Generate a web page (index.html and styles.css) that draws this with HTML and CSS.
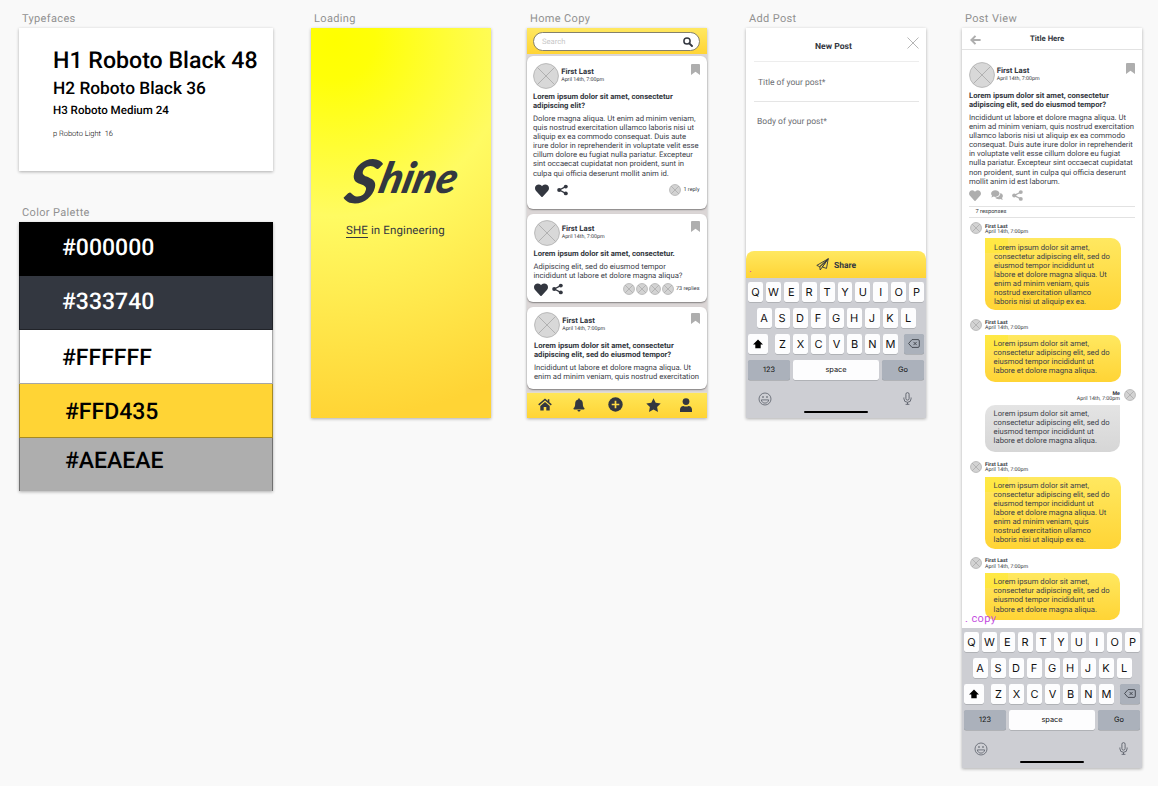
FILE: index.html
```html
<!DOCTYPE html>
<html lang="en">
<head>
<meta charset="utf-8">
<title>Shine artboards</title>
<link rel="stylesheet" href="styles.css">
</head>
<body>
<svg class="defs" width="0" height="0" aria-hidden="true">
  <symbol id="photo" viewBox="0 0 26 26"><circle cx="13" cy="13" r="12.4" fill="#d8d8d8" stroke="#b9b9b9" stroke-width="1"/><path d="M4.3 4.3 21.7 21.7M21.7 4.3 4.3 21.7" stroke="#adadad" stroke-width=".9"/></symbol>
  <symbol id="photo-s" viewBox="0 0 13 13"><circle cx="6.5" cy="6.5" r="5.9" fill="#d3d3d3" stroke="#b3b3b3" stroke-width=".9"/><path d="M2.3 2.3 10.7 10.7M10.7 2.3 2.3 10.7" stroke="#a8a8a8" stroke-width=".8"/></symbol>
  <symbol id="bookmark" viewBox="0 0 9 11"><path d="M1 0h7a1 1 0 0 1 1 1v10L4.500 7.800 0 11V1a1 1 0 0 1 1-1z" fill="#aeaeae"/></symbol>
  <symbol id="heart" viewBox="0 0 512 470"><path fill="currentColor" d="M462 42C408-4 326 4 276 56l-20 21-20-21C186 4 104-4 50 42-13 96-16 191 40 249l193 210c13 14 33 14 46 0l193-210c56-58 53-153-10-207z"/></symbol>
  <symbol id="share" viewBox="0 0 12 12"><path d="M9.500 2.300 2.600 6l6.900 3.700" fill="none" stroke="currentColor" stroke-width="1.400"/><g fill="currentColor"><circle cx="9.600" cy="2.300" r="2.150"/><circle cx="2.400" cy="6" r="2.200"/><circle cx="9.600" cy="9.700" r="2.150"/></g></symbol>
  <symbol id="comments" viewBox="0 0 12 10"><path fill="currentColor" d="M4.300.3C6.700.3 8.500 1.700 8.500 3.600S6.700 6.900 4.300 6.900c-.6 0-1.100-.1-1.600-.3C2 7.100 1.200 7.400.2 7.400c.5-.6.8-1.100.9-1.700C.5 5.100.1 4.400.1 3.600.1 1.700 1.900.3 4.300.3zM9.300 3.100c1.500.4 2.600 1.500 2.600 2.900 0 .8-.4 1.500-.9 2 .1.600.4 1.100.9 1.700-1 0-1.800-.3-2.500-.8-.5.2-1 .3-1.600.3-1.600 0-3-.7-3.700-1.700 2.900.2 5.400-1.500 5.200-4.400z"/></symbol>
  <symbol id="shift" viewBox="0 0 12 10"><path d="M6 .4 11 5.400H8.700V9.300H3.300V5.400H1z" fill="#000"/></symbol>
  <symbol id="delete" viewBox="0 0 12 9"><path d="M4 .6h6a1.300 1.300 0 0 1 1.300 1.300v5.200A1.300 1.300 0 0 1 10 8.400H4L.6 4.500zM5.500 2.900l3.200 3.200M8.700 2.900 5.500 6.100" fill="none" stroke="#30343b" stroke-width=".8"/></symbol>
  <symbol id="smile" viewBox="0 0 14 14"><g fill="none" stroke="#5b606a" stroke-width=".8"><circle cx="7" cy="7" r="6"/><path d="M3.300 7.900h7.400c-.3 2-1.800 3.200-3.700 3.200S3.600 9.900 3.300 7.900z"/></g><g fill="#5b606a"><ellipse cx="5" cy="4.900" rx=".7" ry="1"/><ellipse cx="9" cy="4.900" rx=".7" ry="1"/></g></symbol>
  <symbol id="mic" viewBox="0 0 9 13"><g fill="none" stroke="#5b606a" stroke-width=".9"><rect x="2.900" y=".6" width="3.200" height="7.500" rx="1.600"/><path d="M.9 5.500v1.200a3.600 3.600 0 0 0 7.200 0V5.500M4.500 10.300v2M2.600 12.300h3.800"/></g></symbol>
</svg>

<main class="canvas">
  <section class="board b-type">
    <h2 class="label">Typefaces</h2>
    <div class="frame type">
      <p class="t1">H1 Roboto Black 48</p>
      <p class="t2">H2 Roboto Black 36</p>
      <p class="t3">H3 Roboto Medium 24</p>
      <p class="t4">p Roboto Light&nbsp; 16</p>
    </div>
  </section>

  <section class="board b-color">
    <h2 class="label">Color Palette</h2>
    <div class="frame palette">
      <div class="swatch black">#000000</div>
      <div class="swatch slate">#333740</div>
      <div class="swatch white">#FFFFFF</div>
      <div class="swatch yellow">#FFD435</div>
      <div class="swatch gray">#AEAEAE</div>
    </div>
  </section>

  <section class="board b-load">
    <h2 class="label">Loading</h2>
    <div class="frame loading">
      <svg class="wordmark" width="150" height="76" viewBox="0 0 150 76"><g transform="translate(19 50) skewX(-14)"><text class="brush" font-size="60" x="0" y="10" textLength="31" lengthAdjust="spacingAndGlyphs">S</text><text class="brush" font-size="43" x="32" y="0" textLength="77" lengthAdjust="spacingAndGlyphs">hine</text></g></svg>
      <p class="tagline"><span class="she">SHE</span> in Engineering</p>
    </div>
  </section>

  <section class="board b-home">
    <h2 class="label">Home Copy</h2>
    <div class="frame home">
      <header class="search-bar">
        <div class="search"><span>Search</span><svg width="10" height="10" viewBox="0 0 10 10"><circle cx="4" cy="4" r="3.100" fill="none" stroke="#333740" stroke-width="1.500"/><path d="m6.300 6.300 2.700 2.700" stroke="#333740" stroke-width="1.900" stroke-linecap="round"/></svg></div>
      </header>
      <div class="feed">
        <article class="card c1">
          <div class="author"><svg class="photo"><use href="#photo"/></svg><div class="who"><b>First Last</b><span>April 14th, 7:00pm</span></div><svg class="bookmark"><use href="#bookmark"/></svg></div>
          <h3 class="title">Lorem ipsum dolor sit amet, consectetur<br>adipiscing elit?</h3>
          <p class="copy">Dolore magna aliqua. Ut enim ad minim veniam,<br>quis nostrud exercitation ullamco laboris nisi ut<br>aliquip ex ea commodo consequat. Duis aute<br>irure dolor in reprehenderit in voluptate velit esse<br>cillum dolore eu fugiat nulla pariatur. Excepteur<br>sint occaecat cupidatat non proident, sunt in<br>culpa qui officia deserunt mollit anim id.</p>
          <div class="actions"><svg class="heart"><use href="#heart"/></svg><svg class="share"><use href="#share"/></svg><div class="replies"><svg class="mini"><use href="#photo-s"/></svg><span>1 reply</span></div></div>
        </article>
        <article class="card c2">
          <div class="author"><svg class="photo"><use href="#photo"/></svg><div class="who"><b>First Last</b><span>April 14th, 7:00pm</span></div><svg class="bookmark"><use href="#bookmark"/></svg></div>
          <h3 class="title">Lorem ipsum dolor sit amet, consectetur.</h3>
          <p class="copy">Adipiscing elit, sed do eiusmod tempor<br>incididunt ut labore et dolore magna aliqua?</p>
          <div class="actions"><svg class="heart"><use href="#heart"/></svg><svg class="share"><use href="#share"/></svg><div class="replies"><svg class="mini"><use href="#photo-s"/></svg><svg class="mini"><use href="#photo-s"/></svg><svg class="mini"><use href="#photo-s"/></svg><svg class="mini"><use href="#photo-s"/></svg><span>73 replies</span></div></div>
        </article>
        <article class="card c3">
          <div class="author"><svg class="photo"><use href="#photo"/></svg><div class="who"><b>First Last</b><span>April 14th, 7:00pm</span></div><svg class="bookmark"><use href="#bookmark"/></svg></div>
          <h3 class="title">Lorem ipsum dolor sit amet, consectetur<br>adipiscing elit, sed do eiusmod tempor?</h3>
          <p class="copy">Incididunt ut labore et dolore magna aliqua. Ut<br>enim ad minim veniam, quis nostrud exercitation</p>
        </article>
      </div>
      <nav class="tabs">
        <svg width="14" height="13" viewBox="0 0 14 13"><path d="M.7 6.900 7 1.400l6.300 5.500M10.600 1.300v3" fill="none" stroke="#333740" stroke-width="1.500"/><path d="M7 3.900 11.700 8v4.500H8.300V9H5.700v3.500H2.300V8z" fill="#333740"/></svg>
        <svg width="12" height="14" viewBox="0 0 12 14"><path d="M5.200.4h1.600v1C8.700 1.800 9.800 3.200 9.800 5.200c0 3 .7 4 1.500 4.900.5.600.2 1.300-.5 1.300H1.200c-.7 0-1-.7-.5-1.300.8-.9 1.500-1.900 1.500-4.900 0-2 1.100-3.400 3-3.800zM4.400 12.100h3.200c0 .9-.7 1.500-1.600 1.500s-1.600-.6-1.600-1.500z" fill="#333740"/></svg>
        <svg width="15" height="15" viewBox="0 0 15 15"><circle cx="7.500" cy="7.500" r="7.200" fill="#333740"/><path d="M7.500 3.700v7.600M3.700 7.500h7.600" stroke="#ffdc45" stroke-width="1.700"/></svg>
        <svg width="15" height="14" viewBox="0 0 15 14"><path d="m7.500.2 2.200 4.500 5 .7-3.600 3.500.9 5-4.500-2.400L3 13.900l.9-5L.3 5.400l5-.7z" fill="#333740"/></svg>
        <svg width="12" height="14" viewBox="0 0 12 14"><circle cx="6" cy="3.600" r="3.400" fill="#333740"/><path d="M0 14v-2.400C0 9.500 1.500 8 3.400 8c1.500.8 3.700.8 5.200 0C10.500 8 12 9.500 12 11.600V14z" fill="#333740"/></svg>
      </nav>
    </div>
  </section>

  <section class="board b-add">
    <h2 class="label">Add Post</h2>
    <div class="frame add">
      <header class="add-head"><b>New Post</b><svg width="12" height="12" viewBox="0 0 12 12"><path d="m.5.5 11 11M11.500.5l-11 11" stroke="#aeaeae" stroke-width=".9"/></svg></header>
      <div class="field f1">Title of your post*</div>
      <div class="field f2">Body of your post*</div>
      <div class="share-bar"><i class="dot">.</i><svg width="13" height="13" viewBox="0 0 13 13"><path d="M12.200.8.800 7.400l3 1.300zM12.200.8 10.500 10.400 6.300 9zM12.200.8 3.800 8.700 4.200 12 6.300 9z" fill="none" stroke="#333740" stroke-width=".9" stroke-linejoin="round"/></svg><b>Share</b></div>
      <div class="keyboard">
        <div class="row"><kbd>Q</kbd><kbd>W</kbd><kbd>E</kbd><kbd>R</kbd><kbd>T</kbd><kbd>Y</kbd><kbd>U</kbd><kbd>I</kbd><kbd>O</kbd><kbd>P</kbd></div>
        <div class="row"><kbd>A</kbd><kbd>S</kbd><kbd>D</kbd><kbd>F</kbd><kbd>G</kbd><kbd>H</kbd><kbd>J</kbd><kbd>K</kbd><kbd>L</kbd></div>
        <div class="row"><kbd class="k-shift"><svg width="12" height="10"><use href="#shift"/></svg></kbd><kbd>Z</kbd><kbd>X</kbd><kbd>C</kbd><kbd>V</kbd><kbd>B</kbd><kbd>N</kbd><kbd>M</kbd><kbd class="k-del"><svg width="12" height="9"><use href="#delete"/></svg></kbd></div>
        <div class="row"><kbd class="k-num">123</kbd><kbd class="k-space">space</kbd><kbd class="k-go">Go</kbd></div>
        <div class="dock"><svg width="14" height="14"><use href="#smile"/></svg><svg width="9" height="13"><use href="#mic"/></svg></div>
        <div class="home-line"></div>
      </div>
    </div>
  </section>

  <section class="board b-post">
    <h2 class="label">Post View</h2>
    <div class="frame post">
      <header class="post-head"><svg width="11" height="10" viewBox="0 0 11 10"><path d="M5.500.9 1.400 5l4.100 4.100M1.600 5h9" fill="none" stroke="#aeaeae" stroke-width="2"/></svg><b>Title Here</b></header>
      <article class="entry">
        <div class="author"><svg class="photo"><use href="#photo"/></svg><div class="who"><b>First Last</b><span>April 14th, 7:00pm</span></div><svg class="bookmark"><use href="#bookmark"/></svg></div>
        <h3 class="title">Lorem ipsum dolor sit amet, consectetur<br>adipiscing elit, sed do eiusmod tempor?</h3>
        <p class="copy">Incididunt ut labore et dolore magna aliqua. Ut<br>enim ad minim veniam, quis nostrud exercitation<br>ullamco laboris nisi ut aliquip ex ea commodo<br>consequat. Duis aute irure dolor in reprehenderit<br>in voluptate velit esse cillum dolore eu fugiat<br>nulla pariatur. Excepteur sint occaecat cupidatat<br>non proident, sunt in culpa qui officia deserunt<br>mollit anim id est laborum.</p>
        <div class="entry-actions"><svg width="12" height="11"><use href="#heart"/></svg><svg width="12" height="10"><use href="#comments"/></svg><svg width="11" height="11"><use href="#share"/></svg></div>
        <div class="responses">7 responses</div>
      </article>
      <div class="thread">
        <div class="comment m1"><svg class="mini"><use href="#photo-s"/></svg><div><div class="by"><b>First Last</b><span>April 14th, 7:00pm</span></div><p class="bubble">Lorem ipsum dolor sit amet,<br>consectetur adipiscing elit, sed do<br>eiusmod tempor incididunt ut<br>labore et dolore magna aliqua. Ut<br>enim ad minim veniam, quis<br>nostrud exercitation ullamco<br>laboris nisi ut aliquip ex ea.</p></div></div>
        <div class="comment m2"><svg class="mini"><use href="#photo-s"/></svg><div><div class="by"><b>First Last</b><span>April 14th, 7:00pm</span></div><p class="bubble">Lorem ipsum dolor sit amet,<br>consectetur adipiscing elit, sed do<br>eiusmod tempor incididunt ut<br>labore et dolore magna aliqua.</p></div></div>
        <div class="comment me"><div><div class="by"><b>Me</b><span>April 14th, 7:00pm</span></div><p class="bubble">Lorem ipsum dolor sit amet,<br>consectetur adipiscing elit, sed do<br>eiusmod tempor incididunt ut<br>labore et dolore magna aliqua.</p></div><svg class="mini"><use href="#photo-s"/></svg></div>
        <div class="comment m4"><svg class="mini"><use href="#photo-s"/></svg><div><div class="by"><b>First Last</b><span>April 14th, 7:00pm</span></div><p class="bubble">Lorem ipsum dolor sit amet,<br>consectetur adipiscing elit, sed do<br>eiusmod tempor incididunt ut<br>labore et dolore magna aliqua. Ut<br>enim ad minim veniam, quis<br>nostrud exercitation ullamco<br>laboris nisi ut aliquip ex ea.</p></div></div>
        <div class="comment m5"><svg class="mini"><use href="#photo-s"/></svg><div><div class="by"><b>First Last</b><span>April 14th, 7:00pm</span></div><p class="bubble">Lorem ipsum dolor sit amet,<br>consectetur adipiscing elit, sed do<br>eiusmod tempor incididunt ut<br>labore et dolore magna aliqua.</p></div></div>
      </div>
      <span class="layer-tag">. copy</span>
      <div class="keyboard">
        <div class="row"><kbd>Q</kbd><kbd>W</kbd><kbd>E</kbd><kbd>R</kbd><kbd>T</kbd><kbd>Y</kbd><kbd>U</kbd><kbd>I</kbd><kbd>O</kbd><kbd>P</kbd></div>
        <div class="row"><kbd>A</kbd><kbd>S</kbd><kbd>D</kbd><kbd>F</kbd><kbd>G</kbd><kbd>H</kbd><kbd>J</kbd><kbd>K</kbd><kbd>L</kbd></div>
        <div class="row"><kbd class="k-shift"><svg width="12" height="10"><use href="#shift"/></svg></kbd><kbd>Z</kbd><kbd>X</kbd><kbd>C</kbd><kbd>V</kbd><kbd>B</kbd><kbd>N</kbd><kbd>M</kbd><kbd class="k-del"><svg width="12" height="9"><use href="#delete"/></svg></kbd></div>
        <div class="row"><kbd class="k-num">123</kbd><kbd class="k-space">space</kbd><kbd class="k-go">Go</kbd></div>
        <div class="dock"><svg width="14" height="14"><use href="#smile"/></svg><svg width="9" height="13"><use href="#mic"/></svg></div>
        <div class="home-line"></div>
      </div>
    </div>
  </section>
</main>
</body>
</html>
```
FILE: styles.css
```css
* { box-sizing: border-box; margin: 0; padding: 0; }
body {
  background: #f9f9f9;
  color: #333740;
  font-family: Roboto, "Liberation Sans", sans-serif;
  text-rendering: geometricPrecision;
}
svg { display: block; flex: none; }
.defs { position: absolute; }
.canvas { position: relative; width: 1158px; height: 786px; overflow: hidden; }

/* Artboards on the free canvas */
.board { position: absolute; }
.b-type { left: 19px; top: 10px; width: 254px; }
.b-color { left: 19px; top: 204px; width: 254px; }
.b-load { left: 311px; top: 10px; width: 180px; }
.b-home { left: 527px; top: 10px; width: 179.5px; }
.b-add { left: 746px; top: 10px; width: 180px; }
.b-post { left: 962px; top: 10px; width: 180px; }
.label {
  height: 18px;
  padding-left: 3px;
  font-size: 11px;
  font-weight: 400;
  line-height: 17px;
  letter-spacing: .35px;
  color: #919191;
  white-space: nowrap;
}
.frame { box-shadow: 0 1px 3px rgba(0, 0, 0, .3); background: #fff; }

.type { height: 143px; padding: 18px 0 0 34px; color: #000; white-space: nowrap; }
.t1 { font-size: 23.15px; font-weight: 500; line-height: 29px; }
.t2 { font-size: 17.3px; font-weight: 500; line-height: 28px; }
.t3 { font-size: 11.55px; font-weight: 500; line-height: 14px; }
.t4 { margin-top: 12px; font-size: 7.5px; font-weight: 300; line-height: 10px; }

.palette { height: 269px; }
.swatch {
  height: 54px;
  padding-left: 42px;
  border: 1px solid rgba(0, 0, 0, .35);
  border-top: 0;
  font-size: 23px;
  font-weight: 500;
  line-height: 52px;
  color: #000;
}
.black { background: #000; color: #fff; }
.slate { background: #333740; color: #fff; }
.white { background: #fff; line-height: 56px; }
.yellow { background: #ffd435; padding-left: 45px; line-height: 56px; }
.gray { height: 53px; background: #aeaeae; padding-left: 45px; line-height: 45px; border-bottom: 0; }

.loading {
  height: 390px;
  padding-top: 115px;
  background: radial-gradient(circle at 24px 12px, #ffff00 0, #ffff08 40px, #fffb62 176px, #ffd435 378px);
}
.wordmark { margin-left: 15px; overflow: visible; }
.brush { font-family: Lato, sans-serif; font-weight: 900; font-style: italic; fill: #333740; }
.tagline { margin: 4px 0 0 35px; font-size: 11.5px; line-height: 15px; letter-spacing: .12px; white-space: nowrap; }
.she { display: inline-block; line-height: 14px; border-bottom: 1px solid #333740; }

/* Home feed */
.home { height: 390px; background: #dbd6d6; }
.search-bar { height: 26px; padding: 4px 6px 0 6px; background: linear-gradient(#ffe860, #ffd435); }
.search {
  display: flex;
  align-items: center;
  justify-content: space-between;
  height: 19px;
  width: 167px;
  padding: 0 6px 0 8px;
  border: 1px solid #85816b;
  border-radius: 10px;
  background: #fff;
  font-size: 7.6px;
  color: #c6c6c6;
}
.feed { height: 338px; padding-top: 2px; }
.card {
  padding: 7px 7px 0 6px;
  border-radius: 6px;
  background: #fff;
  box-shadow: 0 1px 1.5px rgba(0, 0, 0, .4);
}
.c1 { height: 153px; margin-bottom: 5px; }
.c2 { height: 88px; margin-bottom: 5px; padding: 6px 7px 0 6.500px; }
.c3 { height: 82px; padding: 5px 7px 0; }
.author { display: flex; height: 26px; }
.photo { width: 26px; height: 26px; }
.who { flex: 1; margin-left: 2.2px; padding-top: 5px; white-space: nowrap; }
.who b { display: block; font-size: 7.75px; line-height: 8px; }
.who span { display: block; font-size: 5.3px; line-height: 8px; }
.bookmark { width: 9px; height: 11px; margin-top: .5px; }
.title { margin-top: 3px; font-size: 7.68px; font-weight: 700; line-height: 9.050px; white-space: nowrap; }
.copy { margin-top: 4px; font-size: 7.68px; line-height: 9.080px; white-space: nowrap; color: #3d414a; }
.actions { display: flex; align-items: center; height: 14px; }
.c1 .actions { margin-top: 5.500px; }
.heart { width: 14px; height: 13px; margin: 1px 0 0 2px; }
.share { width: 11px; height: 12px; margin-left: 8px; }
.c2 .title { margin-top: 3.300px; }
.c2 .copy { margin-top: 4px; }
.c2 .actions { margin-top: 1.700px; }
.c2 .heart { margin-left: 0; }
.c2 .share { margin-left: 4px; }
.replies { display: flex; align-items: center; gap: 1px; margin: -1px 0 0 auto; font-size: 5.45px; }
.c2 .replies { margin-top: 0; }
.replies span { margin-left: 1px; }
.mini { width: 12px; height: 12px; }
.tabs {
  display: flex;
  justify-content: space-between;
  align-items: center;
  height: 26px;
  padding: 0 15px 2px 11px;
  border-top: 1px solid #e4dccb;
  background: linear-gradient(#ffe657, #ffd435);
}
.tabs svg:nth-child(3) { margin-left: 2px; }
.tabs svg:nth-child(4) { margin: 0 -2px 0 2px; }

/* New post form */
.add { display: flex; flex-direction: column; height: 390px; }
.add-head {
  display: flex;
  height: 34px;
  margin: 0 7px 0 8px;
  padding-top: 9px;
  border-bottom: 1px solid #ededed;
  font-size: 8.6px;
  line-height: 20px;
}
.add-head b { margin-left: 61px; }
.add-head svg { margin-left: auto; }
.field { font-size: 8.5px; color: #6b6d72; margin: 0 7px 0 8px; }
.f1 { height: 40px; padding-left: 4px; border-bottom: 1px solid #e5e5e5; line-height: 42px; }
.f2 { padding-left: 3px; line-height: 40px; }
.share-bar {
  position: relative;
  display: flex;
  justify-content: center;
  align-items: center;
  gap: 5px;
  height: 27px;
  margin-top: auto;
  padding-top: 2px;
  border-radius: 8px 8px 0 0;
  background: linear-gradient(#ffe860, #ffd435);
  font-size: 8.5px;
}
.share-bar svg { margin-top: -2px; }
.dot { position: absolute; left: 3px; bottom: 5px; font-size: 11px; line-height: 8px; font-style: normal; color: #d846b4; }

/* On-screen keyboard */
.keyboard { height: 140px; padding: 4px 2px 0; background: #cdced3; }
.row { display: flex; justify-content: center; gap: 3px; height: 25.850px; }
kbd {
  display: flex;
  align-items: center;
  justify-content: center;
  width: 15px;
  height: 20px;
  border-radius: 2px;
  background: #fdfdfe;
  box-shadow: 0 .6px 0 #93959a;
  color: #111;
  font: 400 11px Inter, Roboto, sans-serif;
}
.k-shift { width: 20px; margin-right: 4px; }
.k-del { width: 20px; margin-left: 3px; background: #abb1bb; }
.k-num, .k-space, .k-go { font-size: 7.4px; }
.k-num { width: 43px; background: #abb1bb; }
.k-space { width: 87px; }
.k-go { width: 43px; background: #abb1bb; }
.dock { display: flex; justify-content: space-between; padding: 7px 12px 0 10px; height: 25.600px; }
.home-line { width: 64px; height: 2.400px; margin: 0 auto; border-radius: 2px; background: #000; }

/* Post view */
.post { position: relative; display: flex; flex-direction: column; height: 740px; }
.post .keyboard { margin-top: auto; }
.post-head {
  display: flex;
  height: 22px;
  padding: 7px 9px 0 8px;
  border-bottom: 1px solid #e2e2e2;
  font-size: 7.75px;
}
.post-head b { margin-left: 49px; line-height: 8px; }
.entry { height: 168px; padding: 12px 7px 0; }
.entry .photo { margin-left: -.5px; }
.entry .title { margin-top: 2.700px; }
.entry .copy { margin-top: 4.300px; }
.entry-actions { display: flex; align-items: center; gap: 9.500px; height: 12px; margin-top: 3.700px; color: #aeaeae; }
.responses {
  height: 12px;
  margin-top: 4.300px;
  padding-left: 6.500px;
  border-top: 1px solid #e2e2e2;
  border-bottom: 1px solid #e2e2e2;
  font-size: 5.7px;
  line-height: 11px;
}
.thread { height: 410px; }
.comment { display: flex; margin-left: 7.5px; }
.comment > div { margin-left: 3.500px; }
.comment .mini { margin-top: 1px; }
.by { height: 17px; font-size: 5.35px; line-height: 5.600px; white-space: nowrap; padding-top: 3.300px; }
.by b, .by span { display: block; }
.bubble {
  width: 136px;
  padding: 4.300px 0 0 9px;
  border-radius: 0 10px 10px 10px;
  background: linear-gradient(rgba(255, 234, 30, .4), rgba(255, 234, 30, .4)) 0 0 / 23px 15px no-repeat, linear-gradient(#ffe860, #ffd435);
  font-size: 7.68px;
  line-height: 9.080px;
  white-space: nowrap;
  color: #3d414a;
}
.m1 { height: 99.500px; padding-top: 3.400px; }
.m1 .bubble { height: 72px; }
.m2 { height: 70.300px; }
.m2 .bubble { height: 47px; }
.m2 .bubble, .m4 .bubble, .m5 .bubble, .me .bubble { padding-left: 8.600px; }
.me { height: 71.800px; }
.me > div { margin-left: 15.500px; }
.me .by { text-align: right; padding-top: 4px; }
.me .mini { margin-left: 3.500px; }
.me .bubble { width: 135px; height: 47px; border-radius: 10px 0 10px 10px; background: linear-gradient(#e4e4e4, #d6d6d6); }
.m4 { height: 96.400px; }
.m4 .bubble { height: 72px; }
.m5 .bubble { width: 135px; height: 47px; }
.layer-tag { position: absolute; left: 3px; top: 583px; font-size: 11px; line-height: 15px; letter-spacing: .4px; color: #c44fe0; }
```
